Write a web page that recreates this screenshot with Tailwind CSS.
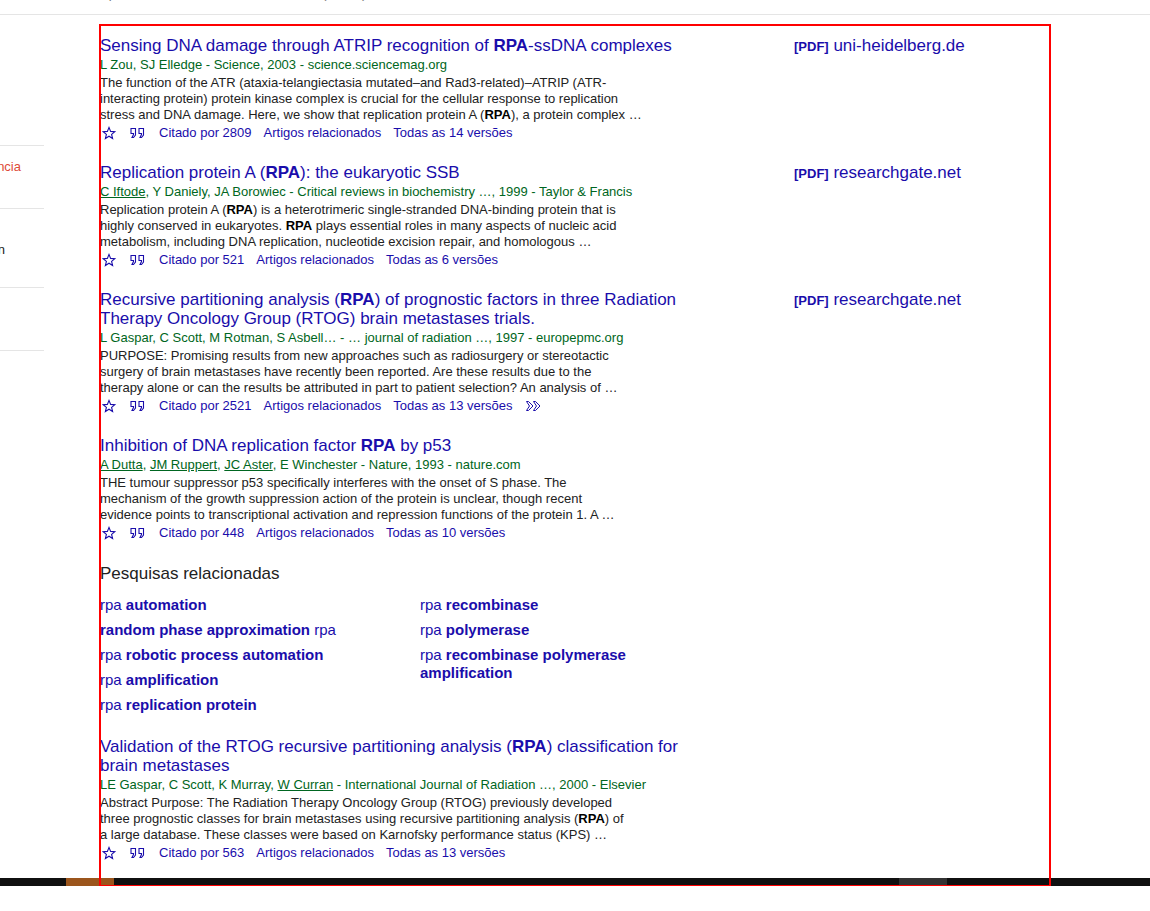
<!DOCTYPE html>
<html lang="pt-BR">
<head>
<meta charset="utf-8">
<title>rpa - Acadêmico</title>
<script src="https://cdn.jsdelivr.net/npm/@tailwindcss/browser@4"></script>
</head>
<body class="bg-white font-['Liberation_Sans',Arial,sans-serif] text-[13px] leading-4 text-[#222222]">
<svg class="hidden" aria-hidden="true">
  <symbol id="star" viewBox="0 0 15 16"><path d="M7 2.4 8.6 6.4 12.8 6.7 9.6 9.4 10.6 13.5 7 11.2 3.4 13.5 4.4 9.4 1.2 6.7 5.4 6.4Z" fill="none" stroke="currentColor" stroke-width="1.1"/></symbol>
  <symbol id="quote" viewBox="0 0 16 16"><path d="M2 3.5H6.5V10L4.5 12.5H3L4.5 9.5V8.5H2ZM10 3.5H14.5V10L12.5 12.5H11L12.5 9.5V8.5H10Z" fill="none" stroke="currentColor" stroke-width="1.1"/></symbol>
  <symbol id="more" viewBox="0 0 16 16"><path d="M1.5 3.5H3.5L8 8 3.5 12.5H1.5L4.5 8ZM8.5 3.5H10.5L15 8 10.5 12.5H8.5L11.5 8Z" fill="none" stroke="currentColor" stroke-width="1"/></symbol>
</svg>
<div class="relative">
  <header class="flex h-[15px] items-end overflow-hidden border-b border-[#e5e5e5] pb-3 pl-[100px] text-[#777777]">
    <p>Aproximadamente 118.000 resultados (0,04 s)</p>
  </header>

  <div class="flex min-h-[863px]">
    <aside class="w-11 shrink-0 overflow-hidden pt-[130px] whitespace-nowrap">
      <div class="flex h-[63px] border-t border-[#e5e5e5] pt-[13px]"><a href="#" class="flex h-4 w-[21px] justify-end text-[#dd4b39]">ncia</a></div>
      <div class="flex h-[79px] border-t border-[#e5e5e5] pt-[33px]"><a href="#" class="flex h-4 w-[5px] justify-end">n</a></div>
      <div class="h-[63px] border-t border-[#e5e5e5]"></div>
      <div class="border-t border-[#e5e5e5]"></div>
    </aside>

    <main class="ml-14 flex min-w-0 flex-1 flex-col gap-[21px] pt-[21px]">
      <article class="flex">
        <div class="w-[600px]">
          <h3 class="text-[17px] leading-[19px]"><a href="#" class="text-[#1a0dab]">Sensing DNA damage through ATRIP recognition of <b>RPA</b>-ssDNA complexes</a></h3>
          <p class="leading-5 text-[#006621]">L Zou, SJ Elledge - Science, 2003 - science.sciencemag.org</p>
          <p>The function of the ATR (ataxia-telangiectasia mutated–and Rad3-related)–ATRIP (ATR-<br>interacting protein) protein kinase complex is crucial for the cellular response to replication<br>stress and DNA damage. Here, we show that replication protein A (<b class="text-black">RPA</b>), a protein complex …</p>
          <div class="flex h-[19px] items-center text-[#1a0dab]"><button aria-label="Salvar" class="mr-3 ml-0.5"><svg class="h-4 w-[15px]"><use href="#star"/></svg></button><button aria-label="Citar" class="mr-3.5"><svg class="size-4"><use href="#quote"/></svg></button><div class="flex gap-3"><a href="#">Citado por 2809</a><a href="#">Artigos relacionados</a><a href="#">Todas as 14 versões</a></div></div>
        </div>
        <a href="#" class="ml-[94px] text-[17px] leading-[19px] text-[#1a0dab]"><span class="text-[13px] font-bold">[PDF]</span> uni-heidelberg.de</a>
      </article>

      <article class="flex">
        <div class="w-[600px]">
          <h3 class="text-[17px] leading-[19px]"><a href="#" class="text-[#1a0dab]">Replication protein A (<b>RPA</b>): the eukaryotic SSB</a></h3>
          <p class="leading-5 text-[#006621]"><a href="#" class="underline">C Iftode</a>, Y Daniely, JA Borowiec - Critical reviews in biochemistry …, 1999 - Taylor &amp; Francis</p>
          <p>Replication protein A (<b class="text-black">RPA</b>) is a heterotrimeric single-stranded DNA-binding protein that is<br>highly conserved in eukaryotes. <b class="text-black">RPA</b> plays essential roles in many aspects of nucleic acid<br>metabolism, including DNA replication, nucleotide excision repair, and homologous …</p>
          <div class="flex h-[19px] items-center text-[#1a0dab]"><button aria-label="Salvar" class="mr-3 ml-0.5"><svg class="h-4 w-[15px]"><use href="#star"/></svg></button><button aria-label="Citar" class="mr-3.5"><svg class="size-4"><use href="#quote"/></svg></button><div class="flex gap-3"><a href="#">Citado por 521</a><a href="#">Artigos relacionados</a><a href="#">Todas as 6 versões</a></div></div>
        </div>
        <a href="#" class="ml-[94px] text-[17px] leading-[19px] text-[#1a0dab]"><span class="text-[13px] font-bold">[PDF]</span> researchgate.net</a>
      </article>

      <article class="flex">
        <div class="w-[600px]">
          <h3 class="text-[17px] leading-[19px]"><a href="#" class="text-[#1a0dab]">Recursive partitioning analysis (<b>RPA</b>) of prognostic factors in three Radiation<br>Therapy Oncology Group (RTOG) brain metastases trials.</a></h3>
          <p class="leading-5 text-[#006621]">L Gaspar, C Scott, M Rotman, S Asbell… - … journal of radiation …, 1997 - europepmc.org</p>
          <p>PURPOSE: Promising results from new approaches such as radiosurgery or stereotactic<br>surgery of brain metastases have recently been reported. Are these results due to the<br>therapy alone or can the results be attributed in part to patient selection? An analysis of …</p>
          <div class="flex h-[19px] items-center text-[#1a0dab]"><button aria-label="Salvar" class="mr-3 ml-0.5"><svg class="h-4 w-[15px]"><use href="#star"/></svg></button><button aria-label="Citar" class="mr-3.5"><svg class="size-4"><use href="#quote"/></svg></button><div class="flex gap-3"><a href="#">Citado por 2521</a><a href="#">Artigos relacionados</a><a href="#">Todas as 13 versões</a><button aria-label="Mais"><svg class="size-4"><use href="#more"/></svg></button></div></div>
        </div>
        <a href="#" class="ml-[94px] text-[17px] leading-[19px] text-[#1a0dab]"><span class="text-[13px] font-bold">[PDF]</span> researchgate.net</a>
      </article>

      <article class="w-[600px]">
        <h3 class="text-[17px] leading-[19px]"><a href="#" class="text-[#1a0dab]">Inhibition of DNA replication factor <b>RPA</b> by p53</a></h3>
        <p class="leading-5 text-[#006621]"><a href="#" class="underline">A Dutta</a>, <a href="#" class="underline">JM Ruppert</a>, <a href="#" class="underline">JC Aster</a>, E Winchester - Nature, 1993 - nature.com</p>
        <p>THE tumour suppressor p53 specifically interferes with the onset of S phase. The<br>mechanism of the growth suppression action of the protein is unclear, though recent<br>evidence points to transcriptional activation and repression functions of the protein 1. A …</p>
        <div class="flex h-[19px] items-center text-[#1a0dab]"><button aria-label="Salvar" class="mr-3 ml-0.5"><svg class="h-4 w-[15px]"><use href="#star"/></svg></button><button aria-label="Citar" class="mr-3.5"><svg class="size-4"><use href="#quote"/></svg></button><div class="flex gap-3"><a href="#">Citado por 448</a><a href="#">Artigos relacionados</a><a href="#">Todas as 10 versões</a></div></div>
      </article>

      <section class="w-[600px] pb-0.5">
        <h2 class="mb-3 text-[17px] leading-[21px]">Pesquisas relacionadas</h2>
        <div class="flex text-[15px] leading-[18px] text-[#1a0dab]">
          <ul class="flex w-80 flex-col gap-[7px]">
            <li><a href="#">rpa <b>automation</b></a></li>
            <li><a href="#"><b>random phase approximation</b> rpa</a></li>
            <li><a href="#">rpa <b>robotic process automation</b></a></li>
            <li><a href="#">rpa <b>amplification</b></a></li>
            <li><a href="#">rpa <b>replication protein</b></a></li>
          </ul>
          <ul class="flex w-60 flex-col gap-[7px]">
            <li><a href="#">rpa <b>recombinase</b></a></li>
            <li><a href="#">rpa <b>polymerase</b></a></li>
            <li><a href="#">rpa <b>recombinase polymerase amplification</b></a></li>
          </ul>
        </div>
      </section>

      <article class="w-[600px]">
        <h3 class="text-[17px] leading-[19px]"><a href="#" class="text-[#1a0dab]">Validation of the RTOG recursive partitioning analysis (<b>RPA</b>) classification for<br>brain metastases</a></h3>
        <p class="leading-5 text-[#006621]">LE Gaspar, C Scott, K Murray, <a href="#" class="underline">W Curran</a> - International Journal of Radiation …, 2000 - Elsevier</p>
        <p>Abstract Purpose: The Radiation Therapy Oncology Group (RTOG) previously developed<br>three prognostic classes for brain metastases using recursive partitioning analysis (<b class="text-black">RPA</b>) of<br>a large database. These classes were based on Karnofsky performance status (KPS) …</p>
        <div class="flex h-[19px] items-center text-[#1a0dab]"><button aria-label="Salvar" class="mr-3 ml-0.5"><svg class="h-4 w-[15px]"><use href="#star"/></svg></button><button aria-label="Citar" class="mr-3.5"><svg class="size-4"><use href="#quote"/></svg></button><div class="flex gap-3"><a href="#">Citado por 563</a><a href="#">Artigos relacionados</a><a href="#">Todas as 13 versões</a></div></div>
      </article>
    </main>
  </div>

  <footer class="flex h-2 bg-[#101010]">
    <div class="ml-[66px] w-12 bg-[#9b551c]"></div>
    <div class="ml-[785px] w-12 bg-[#333333]"></div>
  </footer>

  <div class="pointer-events-none absolute top-6 right-[99px] bottom-0 left-[99px] border-2 border-b border-[#ff0000]"></div>
</div>
</body>
</html>
